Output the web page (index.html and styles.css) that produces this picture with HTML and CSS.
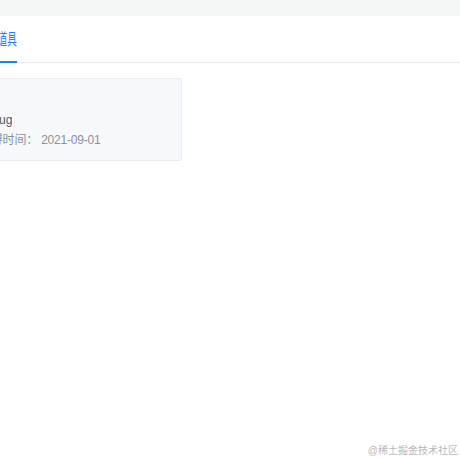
FILE: index.html
```html
<!DOCTYPE html>
<html lang="zh">
<head>
<meta charset="utf-8">
<link rel="stylesheet" href="styles.css">
</head>
<body>
<div class="topbar"></div>
<div class="main">
  <div class="tabs">
    <div class="tab active"><span class="tab-label">道具</span></div>
  </div>
  <div class="list">
    <div class="card">
      <div class="name">捉Bug</div>
      <div class="time">获得时间： 2021-09-01</div>
    </div>
  </div>
</div>
<div class="watermark">@稀土掘金技术社区</div>
</body>
</html>
```
FILE: styles.css
```css
html, body {
  margin: 0;
  padding: 0;
  background: #fff;
  font-family: "Liberation Sans", "Noto Sans CJK SC", sans-serif;
  overflow: hidden;
  height: 460px;
}
.topbar {
  height: 16px;
  background: #f4f5f5;
}
.main {
  margin-left: -40px;
}
.tabs {
  display: flex;
  height: 47px;
  border-bottom: 1px solid #e4e6eb;
  box-sizing: border-box;
  width: 500px;
}
.tab {
  margin-left: 27px;
  width: 30px;
  font-size: 16px;
  line-height: 22px;
  padding-top: 13px;
  color: #1e80ff;
  border-bottom: 2px solid #1e80ff;
  box-sizing: border-box;
  height: 47px;
  margin-bottom: -1px;
  display: flex;
  justify-content: flex-end;
}
.tab-label {
  display: inline-block;
  white-space: nowrap;
  transform: scaleX(0.62);
  transform-origin: right center;
}
.list {
  padding-top: 15px;
}
.card {
  width: 222px;
  height: 83px;
  box-sizing: border-box;
  background: #f7f8fa;
  border: 1px solid #e9ebef;
  border-radius: 3px;
  padding: 31px 0 0 18px;
  font-size: 12px;
  line-height: 20px;
}
.name {
  color: #515767;
}
.time {
  color: #8a919f;
  letter-spacing: -0.2px;
}
.watermark {
  position: absolute;
  right: 2px;
  bottom: 3px;
  font-size: 10px;
  color: #b8b8b8;
}
```
